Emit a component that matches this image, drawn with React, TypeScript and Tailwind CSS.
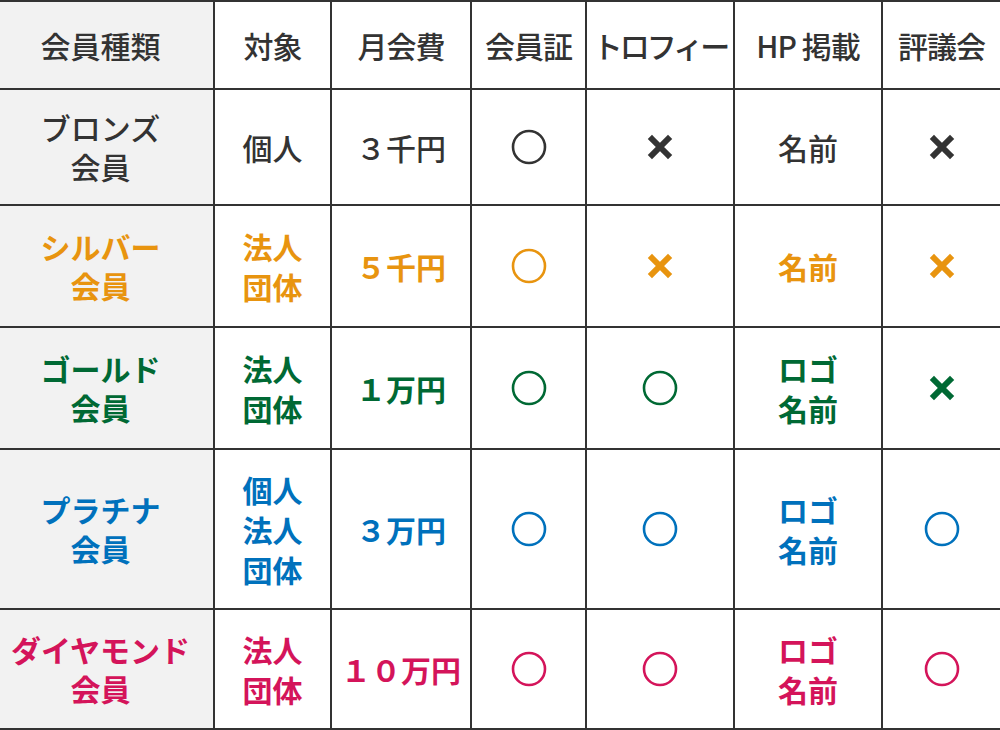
import clsx from 'clsx'

type Mark = 'o' | 'x'

type Row = {
  name: string
  target: string
  fee: string
  card: Mark
  trophy: Mark
  hp: string
  council: Mark
  color: string
  bold: boolean
  h: string
}

const rows: Row[] = [
  {
    name: 'ブロンズ\n会員',
    target: '個人',
    fee: '３千円',
    card: 'o',
    trophy: 'x',
    hp: '名前',
    council: 'x',
    color: 'text-[#333333]',
    bold: false,
    h: 'h-[114px]',
  },
  {
    name: 'シルバー\n会員',
    target: '法人\n団体',
    fee: '５千円',
    card: 'o',
    trophy: 'x',
    hp: '名前',
    council: 'x',
    color: 'text-[#e8940f]',
    bold: true,
    h: 'h-[120px]',
  },
  {
    name: 'ゴールド\n会員',
    target: '法人\n団体',
    fee: '１万円',
    card: 'o',
    trophy: 'o',
    hp: 'ロゴ\n名前',
    council: 'x',
    color: 'text-[#006934]',
    bold: true,
    h: 'h-[120px]',
  },
  {
    name: 'プラチナ\n会員',
    target: '個人\n法人\n団体',
    fee: '３万円',
    card: 'o',
    trophy: 'o',
    hp: 'ロゴ\n名前',
    council: 'o',
    color: 'text-[#0071bc]',
    bold: true,
    h: 'h-[158px]',
  },
  {
    name: 'ダイヤモンド\n会員',
    target: '法人\n団体',
    fee: '１０万円',
    card: 'o',
    trophy: 'o',
    hp: 'ロゴ\n名前',
    council: 'o',
    color: 'text-[#d4145a]',
    bold: true,
    h: 'h-[118px]',
  },
]

const headers = [
  { t: '対象', c: 'tracking-[-1px]' },
  { t: '月会費', c: 'tracking-[-1px]' },
  { t: '会員証', c: 'tracking-[-1px]' },
  { t: 'トロフィー', c: 'tracking-[-3px]' },
  { t: 'HP 掲載', c: 'tracking-[-1px]' },
  { t: '評議会', c: 'tracking-[-1px]' },
]

function Circle() {
  return (
    <svg width="36" height="36" viewBox="0 0 36 36" aria-hidden>
      <circle cx="18" cy="18" r="16" fill="none" stroke="currentColor" strokeWidth="2.6" />
    </svg>
  )
}

function Cross() {
  return (
    <svg width="26" height="26" viewBox="0 0 26 26" aria-hidden>
      <path d="M5 5 L21 21 M21 5 L5 21" stroke="currentColor" strokeWidth="6" strokeLinecap="square" />
    </svg>
  )
}

function MarkCell({ m }: { m: Mark }) {
  return (
    <div className="flex items-center justify-center bg-white">
      {m === 'o' ? <Circle /> : <Cross />}
    </div>
  )
}

export default function App() {
  return (
    <div
      className="w-[1000px] h-[730px] bg-[#333333] py-[2px] text-[30px] text-[#333333]"
      style={{ fontFamily: '"Noto Sans CJK JP", "Noto Sans", sans-serif' }}
    >
      <div className="grid grid-cols-[213px_115px_138px_113px_146px_146px_1fr] gap-[2px]">
        <div className="flex h-[86px] items-center justify-center bg-[#f2f2f2] pr-[12px] font-medium">
          会員種類
        </div>
        {headers.map((h) => (
          <div
            key={h.t}
            className={clsx('flex items-center justify-center whitespace-nowrap bg-white font-medium', h.c)}
          >
            {h.t}
          </div>
        ))}

        {rows.map((r) => (
          <div key={r.name} className={clsx('contents', r.color, r.bold ? 'font-bold' : 'font-medium')}>
            <div
              className={clsx(
                'flex items-center justify-center whitespace-pre-line bg-[#f2f2f2] pr-[12px] text-center leading-[39px]',
                r.h,
              )}
            >
              {r.name}
            </div>
            <div className="flex items-center justify-center whitespace-pre-line bg-white text-center leading-[40px]">
              {r.target}
            </div>
            <div className="flex items-center justify-center bg-white">{r.fee}</div>
            <MarkCell m={r.card} />
            <MarkCell m={r.trophy} />
            <div className="flex items-center justify-center whitespace-pre-line bg-white text-center leading-[40px]">
              {r.hp}
            </div>
            <MarkCell m={r.council} />
          </div>
        ))}
      </div>
    </div>
  )
}
